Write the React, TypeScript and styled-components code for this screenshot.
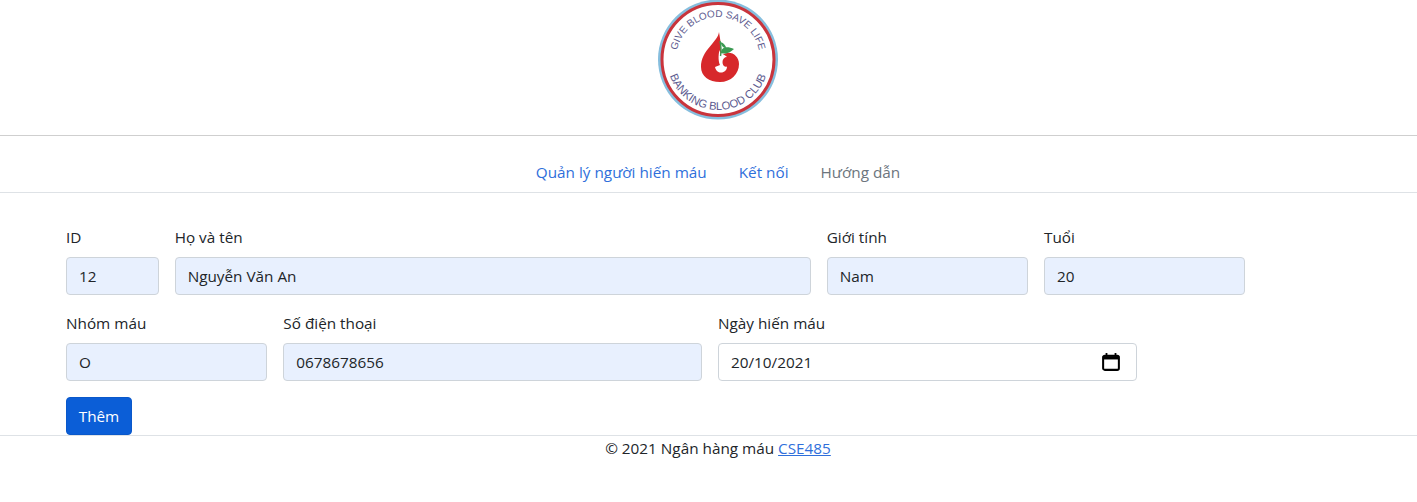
import React from 'react';
import styled, { createGlobalStyle } from 'styled-components';

const GlobalStyle = createGlobalStyle`
  html, body {
    margin: 0;
    overflow: hidden;
    background: #fff;
  }
  body {
    font-family: 'Open Sans', 'Noto Sans', sans-serif;
    font-size: 15.3px;
    line-height: 24px;
    color: #212529;
  }
`;

const Logo = () => (
  <LogoSvg viewBox="0 0 120 120" aria-label="Banking Blood Club">
    <defs>
      <path id="arcTop" d="M 18 59 A 42 42 0 0 1 102 59" />
      <path id="arcBottom" d="M 9 59 A 51 51 0 0 0 111 59" />
    </defs>
    <circle cx="60" cy="59.5" r="60" fill="#86bede" />
    <circle cx="60" cy="59.5" r="56" fill="#fff" stroke="#c9343c" strokeWidth="3" />
    <LogoText fontSize="10">
      <textPath href="#arcTop" startOffset="50%" textAnchor="middle">GIVE BLOOD SAVE LIFE</textPath>
    </LogoText>
    <LogoText fontSize="11.2">
      <textPath href="#arcBottom" startOffset="50%" textAnchor="middle">BANKING BLOOD CLUB</textPath>
    </LogoText>
    <path
      d="M61 32 C60 42 43 50 43 67 C43 76 51 82 62 82 C73 82 81 74 81 64 C81 57 75 52 69 53 C66 53.5 64 55 63 57 C63 50 63 42 61 32 Z"
      fill="#d7282b"
    />
    <path
      d="M61.5 50 C60 56 60.5 62 62 65 L57 67 C58 71 60 72.5 63 72.5 C66.5 72.5 69 70 69 66.5 C66 67.5 64.5 65 64.5 62 C64.5 59 66.5 57 69 57 C66 54 64 54.5 63 56 Z"
      fill="#fff"
    />
    <path d="M62 41 C63 46 63.5 51 62.5 56" fill="none" stroke="#3a9a52" strokeWidth="1.4" />
    <path d="M63 53 C63 47 69 46 76 49 C73 51 70 55 63 53 Z" fill="#3a9a52" />
    <path d="M62.5 42 C66 43 68 46 68 48 C65 48 63.5 46 62.5 42 Z" fill="#3a9a52" />
  </LogoSvg>
);

const CalendarIcon = () => (
  <svg width="18" height="18" viewBox="0 0 16 16" fill="none" stroke="#000" strokeWidth="1.8">
    <rect x="1" y="2.5" width="14" height="12.5" rx="1.5" />
    <rect x="1" y="3" width="14" height="2.4" fill="#000" strokeWidth="0.6" />
    <path d="M4 0v3M12 0v3" strokeWidth="1.6" />
  </svg>
);

const Field = ({ span, label, value }: { span: number; label: string; value: string }) => (
  <FieldCell $span={span}>
    <FieldLabel>{label}</FieldLabel>
    <TextInput readOnly defaultValue={value} />
  </FieldCell>
);

const App = () => {
  return (
    <Page>
      <GlobalStyle />
      <Header>
        <Logo />
      </Header>
      <Nav>
        <NavLink href="#">Quản lý người hiến máu</NavLink>
        <NavLink href="#">Kết nối</NavLink>
        <NavLink href="#" $disabled>
          Hướng dẫn
        </NavLink>
      </Nav>
      <Form>
        <FieldGrid>
          <Field span={1} label="ID" value="12" />
          <Field span={6} label="Họ và tên" value="Nguyễn Văn An" />
          <Field span={2} label="Giới tính" value="Nam" />
          <Field span={2} label="Tuổi" value="20" />
        </FieldGrid>
        <FieldGrid>
          <Field span={2} label="Nhóm máu" value="O" />
          <Field span={4} label="Số điện thoại" value="0678678656" />
          <FieldCell $span={4}>
            <FieldLabel>Ngày hiến máu</FieldLabel>
            <DateBox>
              <DateValue readOnly defaultValue="20/10/2021" />
              <CalendarIcon />
            </DateBox>
          </FieldCell>
        </FieldGrid>
        <SubmitButton type="button">Thêm</SubmitButton>
      </Form>
      <Footer>
        © 2021 Ngân hàng máu <FooterLink href="#">CSE485</FooterLink>
      </Footer>
    </Page>
  );
};

const Page = styled.div`
  width: 1436px;
`;

const Header = styled.header`
  height: 135px;
  display: flex;
  justify-content: center;
  border-bottom: 1px solid #cfcfcf;
`;

const LogoSvg = styled.svg`
  width: 120px;
  height: 120px;
`;

const LogoText = styled.text`
  font-family: 'Liberation Sans', Arial, sans-serif;
  fill: #5d5b8f;
`;

const Nav = styled.nav`
  display: flex;
  justify-content: center;
  padding-top: 16px;
  border-bottom: 1px solid #dee2e6;
`;

const NavLink = styled.a<{ $disabled?: boolean }>`
  padding: 8px 16px;
  color: ${(p) => (p.$disabled ? '#6c757d' : '#2f6fdb')};
  text-decoration: none;
`;

const Form = styled.form`
  width: 1288px;
  padding: 32px 0 0 66px;
  display: flex;
  flex-direction: column;
  align-items: flex-start;
  gap: 16px;
`;

const FieldGrid = styled.div`
  width: 100%;
  display: grid;
  grid-template-columns: repeat(12, 1fr);
  column-gap: 16px;
`;

const FieldCell = styled.div<{ $span: number }>`
  grid-column: span ${(p) => p.$span};
  display: flex;
  flex-direction: column;
`;

const FieldLabel = styled.label`
  margin-bottom: 8px;
`;

const TextInput = styled.input`
  box-sizing: border-box;
  width: 100%;
  height: 38px;
  padding: 6px 12px;
  font: inherit;
  color: #212529;
  background: #e8f0fe;
  border: 1px solid #ced4da;
  border-radius: 4px;
  outline: none;
`;

const DateBox = styled.div`
  box-sizing: border-box;
  height: 38px;
  padding: 0 16px 0 12px;
  display: flex;
  align-items: center;
  border: 1px solid #ced4da;
  border-radius: 4px;
`;

const DateValue = styled.input`
  flex: 1;
  min-width: 0;
  padding: 0;
  font: inherit;
  color: #212529;
  background: transparent;
  border: 0;
  outline: none;
`;

const SubmitButton = styled.button`
  width: 66px;
  height: 38px;
  padding: 0;
  font: inherit;
  color: #fff;
  background: #0b5ed7;
  border: 1px solid #0a58ca;
  border-radius: 4px;
`;

const Footer = styled.footer`
  border-top: 1px solid #dee2e6;
  text-align: center;
`;

const FooterLink = styled.a`
  color: #2f6fdb;
  text-decoration: underline;
`;

export default App;
